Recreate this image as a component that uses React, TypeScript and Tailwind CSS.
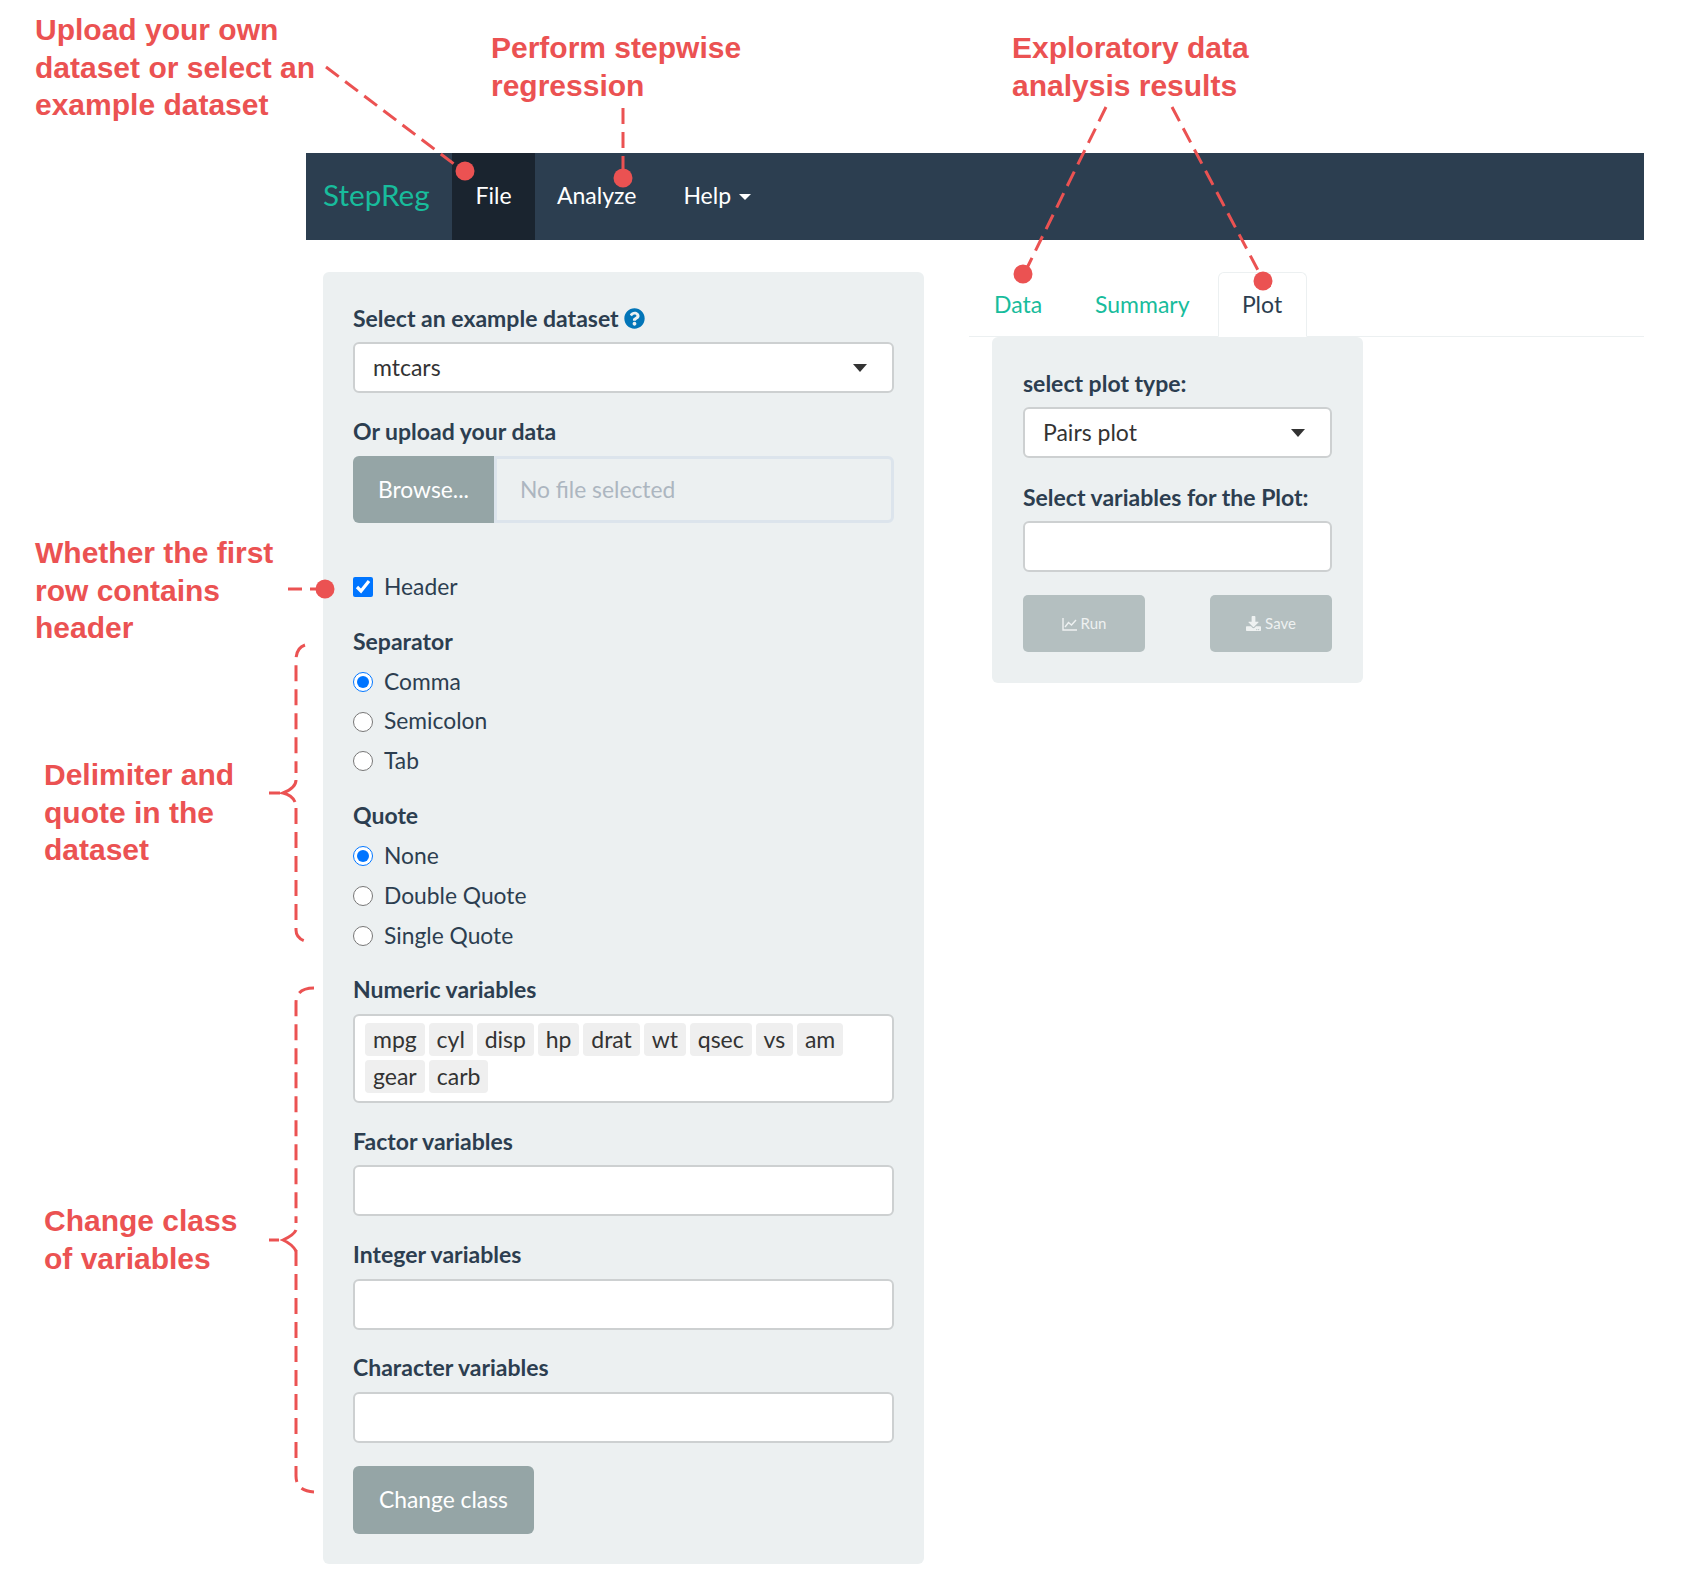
import { FaDownload, FaQuestionCircle } from "react-icons/fa";

const numericVars = ["mpg", "cyl", "disp", "hp", "drat", "wt", "qsec", "vs", "am", "gear", "carb"];

const notes = [
  { cls: "left-[35px] top-[11px]", lines: ["Upload your own", "dataset or select an", "example dataset"] },
  { cls: "left-[491px] top-[29px]", lines: ["Perform stepwise", "regression"] },
  { cls: "left-[1012px] top-[29px]", lines: ["Exploratory data", "analysis results"] },
  { cls: "left-[35px] top-[534px]", lines: ["Whether the first", "row contains", "header"] },
  { cls: "left-[44px] top-[756px]", lines: ["Delimiter and", "quote in the", "dataset"] },
  { cls: "left-[44px] top-[1202px]", lines: ["Change class", "of variables"] },
];

function Label({ children, className = "" }: { children: React.ReactNode; className?: string }) {
  return <div className={`h-8 leading-[31px] text-[23px] font-bold text-[#2c3e50] ${className}`}>{children}</div>;
}

function Box({ children, className = "" }: { children?: React.ReactNode; className?: string }) {
  return (
    <div className={`bg-white border-2 border-[#cdd0d1] rounded-[6px] text-[23px] text-[#333] ${className}`}>{children}</div>
  );
}

function SelectBox({ value, className = "" }: { value: string; className?: string }) {
  return (
    <Box className={`h-[51px] flex items-center justify-between pl-[18px] pr-[25px] ${className}`}>
      <span className="-mt-px">{value}</span>
      <span className="w-0 h-0 border-x-[7px] border-t-[8px] border-x-transparent border-t-[#333]" />
    </Box>
  );
}

function Radio({ name, label, checked }: { name: string; label: string; checked?: boolean }) {
  return (
    <label className="h-8 flex items-center gap-[11px] text-[22.8px] text-[#2c3e50]">
      <input type="radio" name={name} defaultChecked={checked} className="w-5 h-5 m-0 accent-[#0075ff]" />
      <span className="-mt-[2px]">{label}</span>
    </label>
  );
}

function Overlay() {
  return (
    <svg className="absolute left-0 top-0 pointer-events-none" width="1682" height="1592" fill="none" stroke="#eb5252" strokeWidth="3">
      <g strokeDasharray="16 8">
        <path d="M326 67 L458 167" />
        <path d="M623 108 V170" />
        <path d="M1106 107 L1026 270" />
        <path d="M1172 107 L1261 276" />
      </g>
      <path d="M288 589 H302 M310 589 H320" />
      <g strokeDasharray="16 8">
        <path d="M305 645 Q296 648 296 660 V773" />
        <path d="M296 808 V930 Q296 938 305 941" />
        <path d="M314 988 Q296 988 296 1003 V1223" />
        <path d="M296 1250 V1476 Q296 1491 314 1492" />
      </g>
      <path d="M296 780 Q296 788 283 793 Q292 795 295 802 M269 793 H280" />
      <path d="M296 1230 Q294 1235 283 1240 Q292 1244 296 1251 M269 1240 H279" />
      <g fill="#eb5252" stroke="none">
        <circle cx="465" cy="171" r="9.5" />
        <circle cx="623" cy="178" r="9.5" />
        <circle cx="1023" cy="274" r="9.5" />
        <circle cx="1263" cy="281" r="9.5" />
        <circle cx="325" cy="589" r="9.5" />
      </g>
    </svg>
  );
}

export default function App() {
  return (
    <div className="relative w-[1682px] h-[1592px] bg-white overflow-hidden font-['Lato',sans-serif]">
      <div className="ml-[306px] w-[1338px] pt-[153px]">
        {/* navbar */}
        <nav className="h-[87px] pb-[2px] bg-[#2c3e50] flex items-stretch text-white text-[23px]">
          <div className="w-[146px] pl-[17px] flex items-center text-[29.7px] text-[#18bc9c]">StepReg</div>
          <div className="w-[83px] -mb-[2px] pb-[2px] bg-[#1a242f] flex items-center justify-center">File</div>
          <div className="px-[22px] flex items-center">Analyze</div>
          <div className="pl-[25px] flex items-center gap-2">
            Help
            <span className="w-0 h-0 mt-[2px] border-x-[6px] border-t-[6px] border-x-transparent border-t-white" />
          </div>
        </nav>

        <div className="flex mt-8">
          {/* left well */}
          <aside className="ml-[17px] w-[601px] h-[1292px] bg-[#ecf0f1] rounded-[6px] px-[30px] pt-[30px]">
            <Label className="flex items-center gap-[5px]">
              Select an example dataset
              <FaQuestionCircle className="text-[#0275b8] text-[21px]" />
            </Label>
            <SelectBox value="mtcars" className="mt-2" />

            <Label className="mt-[23px]">Or upload your data</Label>
            <div className="mt-2 h-[67px] flex text-[22.8px]">
              <div className="w-[141px] bg-[#95a5a6] text-white rounded-l-[6px] flex items-center justify-center">Browse...</div>
              <div className="flex-1 border-[3px] border-[#dce4ec] rounded-r-[6px] flex items-center pl-[23px] text-[#acb6c0]">No file selected</div>
            </div>

            <label className="mt-12 h-8 flex items-center gap-[11px] text-[22.8px] text-[#2c3e50]">
              <input type="checkbox" defaultChecked className="w-5 h-5 m-0 accent-[#0075ff]" />
              <span className="-mt-[2px]">Header</span>
            </label>

            <Label className="mt-[23px]">Separator</Label>
            <div className="mt-2 flex flex-col gap-[7.5px]">
              <Radio name="sep" label="Comma" checked />
              <Radio name="sep" label="Semicolon" />
              <Radio name="sep" label="Tab" />
            </div>

            <Label className="mt-[23px]">Quote</Label>
            <div className="mt-2 flex flex-col gap-2">
              <Radio name="quote" label="None" checked />
              <Radio name="quote" label="Double Quote" />
              <Radio name="quote" label="Single Quote" />
            </div>

            <Label className="mt-[22px]">Numeric variables</Label>
            <Box className="mt-2 h-[89px] pl-[10px] pt-[7px] pr-[10px] flex flex-wrap content-start gap-x-[3.8px] gap-y-[4px] text-[22.5px]">
              {numericVars.map((v) => (
                <span key={v} className={`h-[33px] leading-[32px] px-2 bg-[#efefef] rounded-[4px] ${v === "gear" ? "basis-[60px] ml-0" : ""}`}>{v}</span>
              ))}
            </Box>

            <Label className="mt-[23px]">Factor variables</Label>
            <Box className="mt-[7px] h-[51px]" />
            <Label className="mt-[22.5px]">Integer variables</Label>
            <Box className="mt-2 h-[51px]" />
            <Label className="mt-[22.5px]">Character variables</Label>
            <Box className="mt-2 h-[51px]" />

            <div className="mt-[23px] w-[181px] h-[68px] bg-[#95a5a6] text-white text-[22.8px] rounded-[6px] flex items-center justify-center pb-px">Change class</div>
          </aside>

          {/* right column */}
          <main className="ml-[45px] flex-1">
            <div className="h-[65px] flex items-stretch border-b border-[#ecf0f1] text-[23px] text-[#18bc9c]">
              <div className="ml-[25px] w-[101px] pt-[15px]">Data</div>
              <div className="w-[123px] pt-[15px]">Summary</div>
              <div className="w-[89px] h-[65px] border border-[#ecf0f1] border-b-white bg-white rounded-t-[6px] text-[#2c3e50] text-center pt-[14px] pr-px">Plot</div>
            </div>
            <div className="ml-[23px] w-[371px] h-[346px] bg-[#ecf0f1] rounded-[6px] px-[31px] pt-[31px]">
              <Label>select plot type:</Label>
              <SelectBox value="Pairs plot" className="mt-[7px]" />
              <Label className="mt-6">Select variables for the Plot:</Label>
              <Box className="mt-[7px] h-[51px]" />
              <div className="mt-[23px] flex justify-between">
                <div className="w-[122px] h-[57px] bg-[#b4bfc0] text-[#eef1f1] text-[15px] rounded-[5px] flex items-center justify-center gap-1">
                  <svg width="15" height="14" viewBox="0 0 15 14" fill="none" stroke="currentColor" strokeWidth="1.4">
                    <path d="M1 1 V13 H15" />
                    <path d="M3 10 L6.5 5.5 L9.5 8 L14 3" />
                  </svg>
                  Run
                </div>
                <div className="w-[122px] h-[57px] bg-[#b4bfc0] text-[#eef1f1] text-[15px] rounded-[5px] flex items-center justify-center gap-1">
                  <FaDownload /> Save
                </div>
              </div>
            </div>
          </main>
        </div>
      </div>

      {/* annotations */}
      {notes.map((n) => (
        <div key={n.lines[0]} className={`absolute ${n.cls} font-['Liberation_Sans',sans-serif] font-bold text-[30px] leading-[37.5px] text-[#eb5252] whitespace-nowrap`}>
          {n.lines.map((l) => (
            <div key={l}>{l}</div>
          ))}
        </div>
      ))}
      <Overlay />
    </div>
  );
}
